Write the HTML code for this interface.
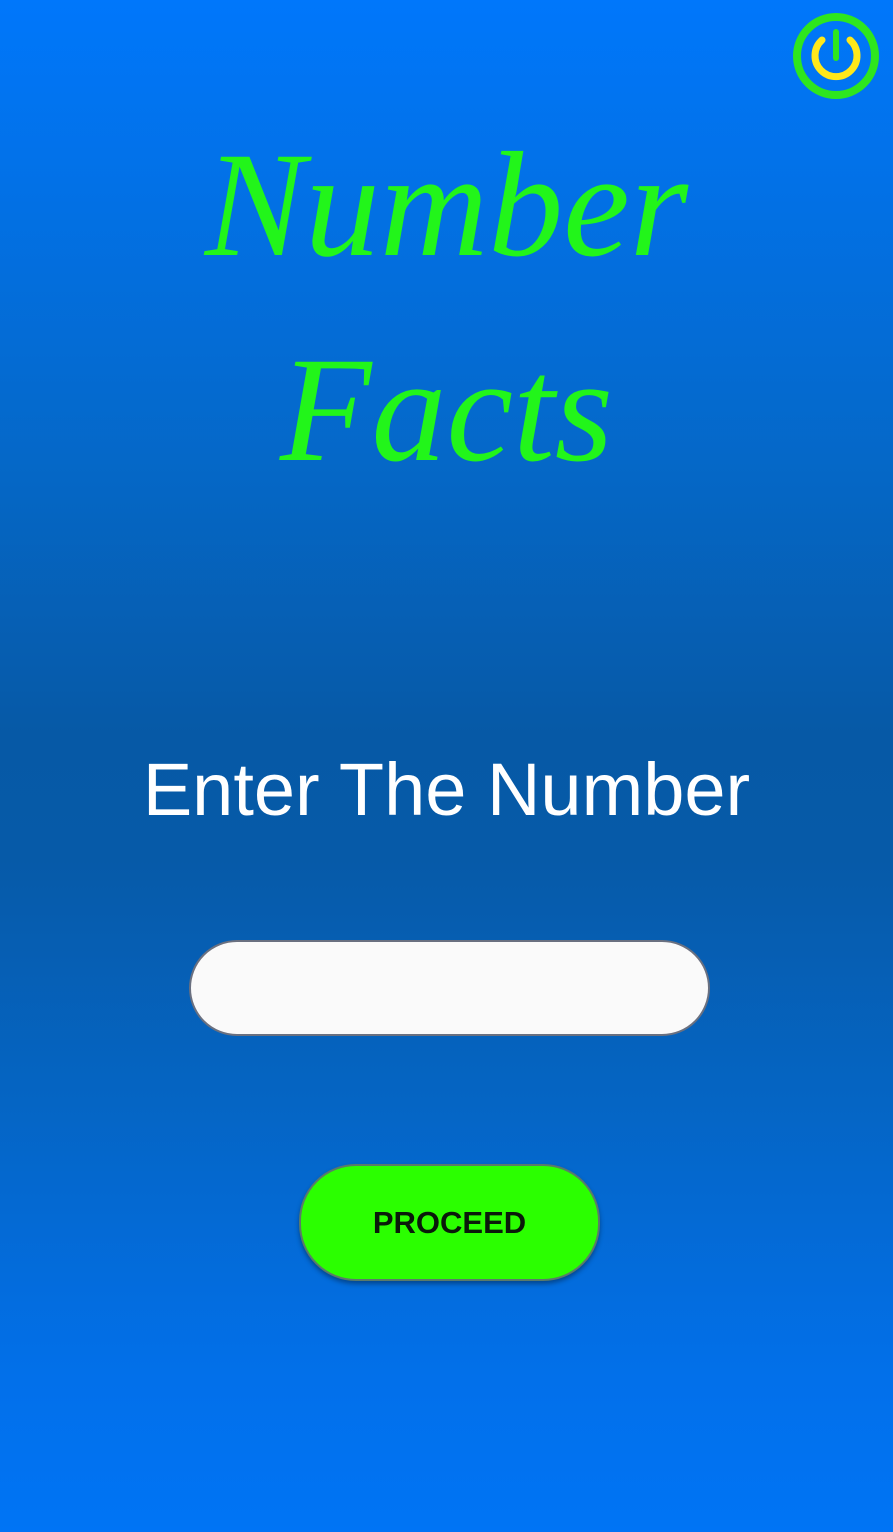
<!DOCTYPE html>
<html><head><meta charset="utf-8"><style>
html,body{margin:0;padding:0;}
body{width:893px;height:1532px;position:relative;overflow:hidden;
background:linear-gradient(180deg,#0077fb 0%,#0568c8 30%,#0659a6 48%,#065aa8 56%,#0565c4 72%,#0270ea 90%,#0074f5 100%);
font-family:"Liberation Sans",sans-serif;}
.t{position:absolute;left:0;width:893px;text-align:center;color:#22f51a;font-family:"Liberation Serif",serif;font-style:italic;}
.enter{position:absolute;left:0;width:893px;top:750px;text-align:center;color:#fff;font-size:74px;line-height:80px;}
.inp{position:absolute;left:189px;top:940px;width:517px;height:92px;border:2px solid #6a7080;border-radius:48px;background:#fafafa;}
.btn{position:absolute;left:299px;top:1164px;width:297px;height:113px;border:2px solid #5a7a6a;border-radius:57px;background:#2bff00;box-shadow:0 3px 5px rgba(0,0,0,.35);text-align:center;line-height:113px;font-size:31px;font-weight:bold;color:#0a1a0a;}
</style></head><body>
<svg style="position:absolute;left:790px;top:10px" width="92" height="92" viewBox="0 0 92 92">
<circle cx="46" cy="46" r="39" fill="none" stroke="#2ee61e" stroke-width="8"/>
<path d="M32 30 A21 21 0 1 0 60 30" fill="none" stroke="#ffe81a" stroke-width="7" stroke-linecap="round"/>
<line x1="46" y1="22" x2="46" y2="48" stroke="#2ee61e" stroke-width="6" stroke-linecap="round"/>
</svg>
<div class="t" style="top:115px;font-size:150px;line-height:180px;">Number</div>
<div class="t" style="top:320px;font-size:150px;line-height:180px;">Facts</div>
<div class="enter">Enter The Number</div>
<div class="inp"></div>
<div class="btn">PROCEED</div>
</body></html>
